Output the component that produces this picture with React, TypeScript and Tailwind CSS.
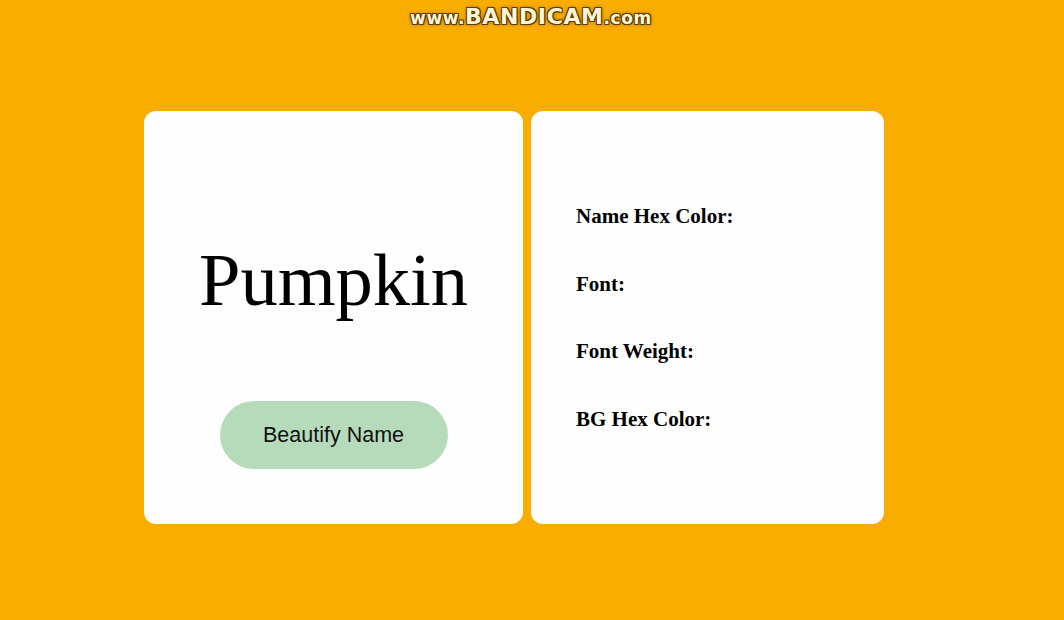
import React from 'react';

const labels = ['Name Hex Color:', 'Font:', 'Font Weight:', 'BG Hex Color:'];

export default function App() {
	return (
		<div className="relative h-[620px] w-[1064px] overflow-hidden bg-[#f9ad00]">
			{/* recorder watermark */}
			<div
				className="absolute left-[400px] top-[3px] w-[262px] text-center text-[22px] font-bold leading-[28px] tracking-[0.6px] text-[#fff4d6]"
				style={{
					fontFamily: '"DejaVu Sans", sans-serif',
					textShadow:
						'1px 1px 0 #5a3a00, -1px -1px 0 #5a3a00, 1px -1px 0 #5a3a00, -1px 1px 0 #5a3a00, 0 0 4px #7a4a00',
				}}
			>
				<span className="text-[17px]">www.</span>BANDICAM<span className="text-[17px]">.com</span>
			</div>

			<div className="flex gap-2 pl-[144px] pt-[111px]">
				<div className="flex h-[413px] w-[379px] flex-col items-center rounded-xl bg-[#fefefe]">
					<h1
						className="mt-[132px] text-[74.5px] leading-[74px] text-black"
						style={{ fontFamily: '"Liberation Serif", serif' }}
					>
						Pumpkin
					</h1>
					<button
						className="mt-[84px] h-[68px] w-[228px] rounded-full bg-[#b5dbbb] text-[21.5px] text-[#111]"
						style={{ fontFamily: '"Liberation Sans", Arial, sans-serif' }}
					>
						Beautify Name
					</button>
				</div>

				<div className="flex h-[413px] w-[353px] flex-col gap-[47.5px] rounded-xl bg-[#fefefe] pl-[45px] pt-[95px]">
					{labels.map(label => (
						<p
							key={label}
							className="h-5 text-[21px] font-bold leading-5 text-black"
							style={{ fontFamily: '"Liberation Serif", serif' }}
						>
							{label}
						</p>
					))}
				</div>
			</div>
		</div>
	);
}
